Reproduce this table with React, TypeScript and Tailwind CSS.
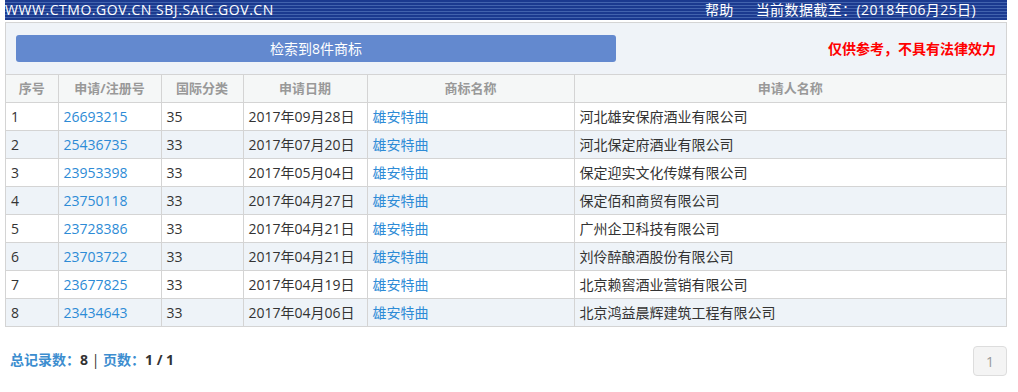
import React from 'react';

const rows = [
  { no: 1, reg: '26693215', cls: '35', date: '2017年09月28日', mark: '雄安特曲', owner: '河北雄安保府酒业有限公司' },
  { no: 2, reg: '25436735', cls: '33', date: '2017年07月20日', mark: '雄安特曲', owner: '河北保定府酒业有限公司' },
  { no: 3, reg: '23953398', cls: '33', date: '2017年05月04日', mark: '雄安特曲', owner: '保定迎实文化传媒有限公司' },
  { no: 4, reg: '23750118', cls: '33', date: '2017年04月27日', mark: '雄安特曲', owner: '保定佰和商贸有限公司' },
  { no: 5, reg: '23728386', cls: '33', date: '2017年04月21日', mark: '雄安特曲', owner: '广州企卫科技有限公司' },
  { no: 6, reg: '23703722', cls: '33', date: '2017年04月21日', mark: '雄安特曲', owner: '刘伶醉酿酒股份有限公司' },
  { no: 7, reg: '23677825', cls: '33', date: '2017年04月19日', mark: '雄安特曲', owner: '北京赖窖酒业营销有限公司' },
  { no: 8, reg: '23434643', cls: '33', date: '2017年04月06日', mark: '雄安特曲', owner: '北京鸿益晨辉建筑工程有限公司' },
];

const heads = ['序号', '申请/注册号', '国际分类', '申请日期', '商标名称', '申请人名称'];
const widths = ['w-[52px]', 'w-[103px]', 'w-[82px]', 'w-[124px]', 'w-[207px]', ''];

export default function App() {
  return (
    <div className="h-[392px] w-[1018px] bg-white px-[5px] pr-[11px] font-['Open_Sans','Noto_Sans_CJK_SC',sans-serif] text-[14px] text-[#333]">
      <div className="flex h-[20px] items-center justify-between bg-[repeating-linear-gradient(to_bottom,#1b3a8f_0px,#1b3a8f_2px,#4263ad_2px,#4263ad_3px)] pr-[31px] leading-none text-white">
        <span className="tracking-[0.55px]">WWW.CTMO.GOV.CN SBJ.SAIC.GOV.CN</span>
        <span className="flex gap-[22px] tracking-[0.4px]">
          <span>帮助</span>
          <span>当前数据截至：(2018年06月25日)</span>
        </span>
      </div>

      <div className="mt-[2px] border border-[#d4d4d4] border-b-0">
        <div className="flex h-[51px] items-center bg-[#eff3f8] pl-[10px] pr-[10px]">
          <div className="flex h-[27px] w-[600px] items-center justify-center rounded-[3px] bg-[#6389cf] text-white">
            检索到8件商标
          </div>
          <div className="ml-auto text-[14px] font-bold text-[#f00]">仅供参考，不具有法律效力</div>
        </div>

        <table className="w-full table-fixed border-collapse">
          <thead>
            <tr className="h-[28px] bg-[#f5f7f7] text-[13px] font-bold text-[#999]">
              {heads.map((h, i) => (
                <th key={h} className={`${widths[i]} border border-[#d4d4d4] border-l-0 p-0 text-center font-bold last:border-r-0`}>
                  {h}
                </th>
              ))}
            </tr>
          </thead>
          <tbody>
            {rows.map((r) => (
              <tr key={r.no} className={r.no % 2 === 0 ? 'h-[28px] bg-[#eef3f8]' : 'h-[28px] bg-white'}>
                <td className="border border-l-0 border-[#d4d4d4] px-[5px] py-0">{r.no}</td>
                <td className="border border-[#d4d4d4] px-[5px] py-0 text-[#2d8bd6]">{r.reg}</td>
                <td className="border border-[#d4d4d4] px-[5px] py-0">{r.cls}</td>
                <td className="border border-[#d4d4d4] px-[5px] py-0">{r.date}</td>
                <td className="border border-[#d4d4d4] px-[5px] py-0 text-[#2d8bd6]">{r.mark}</td>
                <td className="border border-r-0 border-[#d4d4d4] px-[5px] py-0">{r.owner}</td>
              </tr>
            ))}
          </tbody>
        </table>
      </div>

      <div className="mt-[19px] flex items-start justify-between pl-[5px]">
        <div className="pt-[4px] text-[14px] leading-[20px] font-bold text-[#3c8dcf]">
          总记录数：<span className="text-[#333]">8</span>
          <span className="font-normal text-[#333]"> | </span>
          页数：<span className="text-[#333]">1 / 1</span>
        </div>
        <div className="flex h-[30px] w-[34px] items-center justify-center rounded-[4px] border border-[#ddd] bg-[#f4f4f4] text-[#999]">
          1
        </div>
      </div>
    </div>
  );
}
